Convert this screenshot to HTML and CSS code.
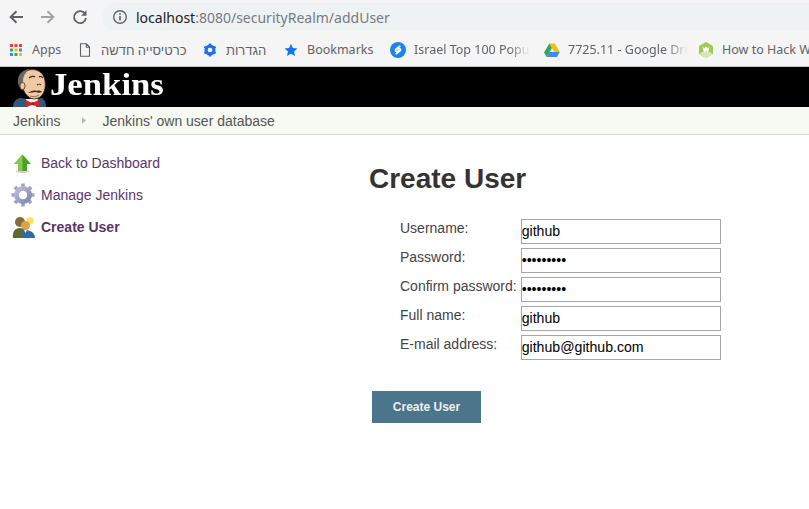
FILE: index.html
```html
<!DOCTYPE html>
<html>
<head>
  <meta charset="utf-8">
  <title>Create User [Jenkins]</title>
  <link rel="stylesheet" href="styles.css">
</head>
<body>
  <div class="browser">
    <div class="toolbar">
      <svg class="nav-icon" viewBox="0 0 16 16"><path d="M15 8H3M8.5 2.200 2.600 8l5.900 5.800" fill="none" stroke="#5f6368" stroke-width="1.900"/></svg>
      <svg class="nav-icon" viewBox="0 0 16 16"><path d="M1 8h12M7.500 2.200 13.400 8l-5.900 5.800" fill="none" stroke="#a0a2a5" stroke-width="1.900"/></svg>
      <svg class="nav-icon" viewBox="0 0 16 16"><path d="M13.300 5.200A6 6 0 1 0 14 9" fill="none" stroke="#5f6368" stroke-width="1.800"/><path d="M14.500 1.300v5.400H9.100z" fill="#5f6368"/></svg>
      <div class="omnibox">
        <svg class="info" viewBox="0 0 16 16"><circle cx="8" cy="8" r="6.300" fill="none" stroke="#5f6368" stroke-width="1.400"/><path d="M7.200 7h1.600v4.600H7.200zM7.200 4.300h1.600v1.600H7.200z" fill="#5f6368"/></svg>
        <span class="host">localhost</span><span class="url-rest">:8080/securityRealm/addUser</span>
      </div>
    </div>
    <div class="bookmarks">
      <div class="bookmark b-apps">
        <svg class="bm-icon" viewBox="0 0 14 14">
          <path d="M1 1h3v3H1z" fill="#ea4335"/><path d="M5.500 1h3v3h-3z" fill="#ea4335"/><path d="M10 1h3v3h-3z" fill="#ea4335"/>
          <path d="M1 5.500h3v3H1z" fill="#34a853"/><path d="M5.500 5.500h3v3h-3z" fill="#fbbc05"/><path d="M10 5.500h3v3h-3z" fill="#4285f4"/>
          <path d="M1 10h3v3H1z" fill="#4285f4"/><path d="M5.500 10h3v3h-3z" fill="#34a853"/><path d="M10 10h3v3h-3z" fill="#fbbc05"/>
        </svg>
        <span>Apps</span>
      </div>
      <div class="bookmark b-tab">
        <svg class="bm-icon" viewBox="0 0 14 14"><path d="M2.500.8h6l3 3.200v9.200h-9zM8.300.8v3.400h3.200" fill="none" stroke="#5f6368" stroke-width="1.100"/></svg>
        <span class="hebrew" dir="rtl">כרטיסייה חדשה</span>
      </div>
      <div class="bookmark b-settings">
        <svg class="bm-icon" viewBox="0 0 14 14"><circle cx="7" cy="7" r="4" fill="none" stroke="#1a73e8" stroke-width="3"/><path d="M7 .5v13M1.400 3.750l11.200 6.500M1.400 10.250l11.200-6.500" stroke="#1a73e8" stroke-width="2.600"/><circle cx="7" cy="7" r="2.300" fill="#f5f5f5"/></svg>
        <span class="hebrew" dir="rtl">הגדרות</span>
      </div>
      <div class="bookmark b-star">
        <svg class="bm-icon" viewBox="0 0 14 14"><path d="M7 .8l1.900 4.300 4.600.4-3.500 3 1.100 4.600L7 10.700l-4.100 2.400L4 8.500.5 5.500l4.600-.4z" fill="#1a73e8"/></svg>
        <span>Bookmarks</span>
      </div>
      <div class="bookmark b-top">
        <svg class="bm-icon bm-big" viewBox="0 0 16 16"><circle cx="8" cy="8" r="8" fill="#1a84f0"/><path d="M9.800 4.300 6 7.200c-1.500 1.200.6 3 2 1.800M6.200 11.700 10 8.800c1.500-1.200-.6-3-2-1.800" fill="none" stroke="#fff" stroke-width="1.700" stroke-linecap="round"/></svg>
        <span class="fade">Israel Top 100 Popu</span>
      </div>
      <div class="bookmark b-drive">
        <svg class="bm-icon bm-big" viewBox="0 0 16 15"><path d="M5.300 1h5.400l5 8.600h-5.300z" fill="#fbbc05"/><path d="M5.300 1 0 10l2.700 4.500L8 5.600z" fill="#34a853"/><path d="M5.400 9.600h10.300L13 14.500H2.700z" fill="#4285f4"/></svg>
        <span class="fade">7725.11 - Google Dri</span>
      </div>
      <div class="bookmark b-hack">
        <svg class="bm-icon bm-big" viewBox="0 0 16 16"><path d="M8 0l7 4v8l-7 4-7-4V4z" fill="#9ccc50"/><path d="M1 12l7 4 7-4-3-2H4z" fill="#d5e8b0"/><path d="M4.500 5l1.500 6 2-2 2 2 1.500-6-1.800 1L8 4.500 6.300 6z" fill="#fff"/></svg>
        <span>How to Hack W</span>
      </div>
    </div>
  </div>

  <div class="jenkins-header">
    <svg class="butler" viewBox="0 0 36 40">
      <path d="M1 40c0-5 3-8 7-9l7 1h8l7-1c3 2 4 5 4 9z" fill="#2f5a78"/>
      <path d="M14 32h12l-2 8h-8z" fill="#f2f2f2"/>
      <path d="M11 21C8 14 10 5 17 3c8-2 15 3 16 11 1 7-1 13-5 16-3 2-8 3-11 0-3-2-5-5-6-9z" fill="#eec9a3" stroke="#3b2c22" stroke-width=".8"/>
      <path d="M11 24C5 20 4 11 9 6c3-3 6-4 9-4-5 3-7 8-7 12-1 3-1 6 0 10z" fill="#6a6660"/>
      <ellipse cx="10.500" cy="19" rx="2.600" ry="3.600" fill="#eec9a3" stroke="#3b2c22" stroke-width=".8"/>
      <path d="M17 11c2-2 5-2 6-1M27 10c1-1 3 0 4 1M25 18c1-1 3-1 4 0" stroke="#3b2c22" stroke-width="1.100" fill="none"/>
      <path d="M16 26c3-2 6-3 9-2 2-1 4 0 5 1-2 1-4 1-6 0-3 0-5 1-8 1z" fill="#3b2c22"/>
      <path d="M18 29c3 1 6 1 9-1" stroke="#8a5a44" stroke-width=".9" fill="none"/>
      <path d="M14 33l6 3 7-3 1 7-8-2-6 2z" fill="#d2272b"/>
      <circle cx="20.500" cy="36.500" r="1.500" fill="#a81a1e"/>
    </svg>
    <span class="jenkins-title">Jenkins</span>
  </div>

  <div class="breadcrumbs">
    <a class="crumb" href="#">Jenkins</a>
    <svg class="crumb-sep" viewBox="0 0 5 8"><path d="M0 0l5 4-5 4z" fill="#b4b8b2"/></svg>
    <a class="crumb" href="#">Jenkins' own user database</a>
  </div>

  <div class="main">
    <div class="side-panel">
      <a class="task" href="#">
        <svg class="task-icon" viewBox="0 0 24 24">
          <ellipse cx="11.500" cy="20.500" rx="7" ry="1.500" fill="#cfcfcf"/>
          <path d="M11.500 3.500 20 13h-4v7H7v-7H3z" fill="#4f9f2b"/>
          <path d="M11.500 3.500 3 13h4v7h4.500z" fill="#85c94f"/>
        </svg>
        <span>Back to Dashboard</span>
      </a>
      <a class="task" href="#">
        <svg class="task-icon" viewBox="0 0 24 24">
          <defs><linearGradient id="gear" x1="0" y1="0" x2="1" y2="1"><stop offset="0" stop-color="#b9bdd8"/><stop offset="1" stop-color="#8388ae"/></linearGradient></defs>
          <path d="M12 .5v23M.5 12h23M3.900 3.900l16.200 16.200M20.100 3.900 3.900 20.100" stroke="#9ea2c4" stroke-width="3.600"/>
          <circle cx="12" cy="12" r="6.500" fill="none" stroke="url(#gear)" stroke-width="5"/>
          <circle cx="12" cy="12" r="4.200" fill="#fff"/>
        </svg>
        <span>Manage Jenkins</span>
      </a>
      <a class="task task-current" href="#">
        <svg class="task-icon" viewBox="0 0 24 24">
          <circle cx="9" cy="7" r="5" fill="#8a6a3a"/>
          <path d="M2 23c-1-6 2-10 7-10s7 3 7 10z" fill="#606a2c"/>
          <circle cx="19" cy="6" r="3.800" fill="#f7e35f"/>
          <circle cx="14.500" cy="10.500" r="4.500" fill="#d8a154"/>
          <path d="M10 23c0-5 1-8 4.500-8s9.500 2 9.500 8z" fill="#356a9f"/>
          <path d="M13 15h3l-1.500 3z" fill="#fff"/>
        </svg>
        <span>Create User</span>
      </a>
    </div>

    <div class="content">
      <h1>Create User</h1>
      <table class="user-form">
        <tr><td>Username:</td><td><input type="text" value="github"></td></tr>
        <tr><td>Password:</td><td><input type="password" value="password1"></td></tr>
        <tr><td>Confirm password:</td><td><input type="password" value="password1"></td></tr>
        <tr><td>Full name:</td><td><input type="text" value="github"></td></tr>
        <tr><td>E-mail address:</td><td><input type="text" value="github@github.com"></td></tr>
      </table>
      <button class="submit" type="button">Create User</button>
    </div>
  </div>
</body>
</html>
```

FILE: styles.css
```css
html, body {
  margin: 0;
  padding: 0;
  background: #fff;
  overflow: hidden;
}

body {
  font-family: "Liberation Sans", Arial, sans-serif;
  font-size: 14px;
  color: #333;
}

a {
  text-decoration: none;
}

/* browser chrome */
.browser {
  height: 66px;
  background: #f5f5f5;
  border-bottom: 1px solid #c4c4c4;
  font-family: "Noto Sans", sans-serif;
  overflow: hidden;
}

.toolbar {
  display: flex;
  align-items: center;
  height: 34px;
}

.nav-icon {
  width: 16px;
  height: 16px;
  margin-left: 8px;
  margin-right: 8px;
}

.nav-icon + .nav-icon {
  margin-left: 8px;
}

.omnibox {
  flex: 1;
  display: flex;
  align-items: center;
  height: 28px;
  margin-left: 6px;
  padding-left: 10px;
  background: #eff2f3;
  border-radius: 14px 0 0 14px;
  font-size: 14px;
  white-space: nowrap;
}

.info {
  width: 16px;
  height: 16px;
  margin-right: 8px;
}

.host {
  color: #202124;
}

.url-rest {
  color: #777b7e;
}

.bookmarks {
  display: flex;
  align-items: center;
  height: 31px;
  font-size: 12.500px;
  color: #5f6368;
  white-space: nowrap;
}

.bookmark {
  display: flex;
  align-items: center;
  flex: none;
}

.bm-icon {
  width: 14px;
  height: 14px;
  margin-right: 9px;
  flex: none;
}

.bm-big {
  width: 16px;
  height: 16px;
  margin-right: 8px;
}

.hebrew {
  font-size: 13px;
}

.b-apps { width: 78px; padding-left: 9px; box-sizing: border-box; }
.b-tab { width: 125px; }
.b-settings { width: 81px; }
.b-star { width: 106px; }
.b-top { width: 154px; }
.b-drive { width: 154px; }

/* long bookmark names fade out at their end */
.fade {
  display: block;
  -webkit-mask-image: linear-gradient(to right, #000 82%, transparent 100%);
  mask-image: linear-gradient(to right, #000 82%, transparent 100%);
}

/* jenkins header */
.jenkins-header {
  display: flex;
  align-items: flex-end;
  height: 40px;
  padding-left: 12px;
  background: #000;
  overflow: hidden;
}

.butler {
  width: 36px;
  height: 40px;
  flex: none;
}

.jenkins-title {
  align-self: center;
  margin: 0 0 5px 2px;
  font-family: "Liberation Serif", serif;
  font-weight: bold;
  font-size: 32px;
  line-height: 35px;
  color: #fff;
  transform: scaleX(1.085);
  transform-origin: left center;
}

.breadcrumbs {
  display: flex;
  align-items: center;
  height: 27px;
  padding-left: 13px;
  background: #f6faf2;
  border-bottom: 1px solid #d3d7cf;
}

.crumb {
  color: #555;
}

.crumb-sep {
  width: 4px;
  height: 7px;
  margin: 0 16px 0 22px;
}

/* page body */
.main {
  display: flex;
}

.side-panel {
  width: 369px;
  flex: none;
  padding-top: 12px;
  box-sizing: border-box;
}

.task {
  display: flex;
  align-items: center;
  height: 32px;
  padding-left: 11px;
  color: #5c3566;
}

.task-current {
  font-weight: bold;
}

.task-icon {
  width: 24px;
  height: 24px;
  margin-right: 6px;
  flex: none;
}

.content h1 {
  margin: 26px 0 0;
  font-size: 28px;
  line-height: 36px;
  color: #333;
}

.user-form {
  margin: 22px 0 0 31px;
  border-collapse: separate;
  border-spacing: 0;
}

.user-form td {
  padding: 0 0 4px;
  vertical-align: top;
  line-height: 18px;
}

.user-form td:first-child {
  padding-right: 4px;
  color: #444;
}

.user-form input {
  display: block;
  width: 200px;
  height: 25px;
  box-sizing: border-box;
  margin: 0;
  padding: 0 1px 2px 0;
  border: 1px solid #a6a6a6;
  border-radius: 0;
  background: #fff;
  font-family: "Liberation Sans", Arial, sans-serif;
  font-size: 14.130px;
  color: #000;
  outline: none;
}

.submit {
  display: block;
  width: 109px;
  height: 32px;
  margin: 27px 0 0 3px;
  padding: 0;
  border: 1px solid #4b758b;
  background: #4b758b;
  color: #eee;
  font-family: "Liberation Sans", Arial, sans-serif;
  font-size: 12px;
  font-weight: bold;
}
```
